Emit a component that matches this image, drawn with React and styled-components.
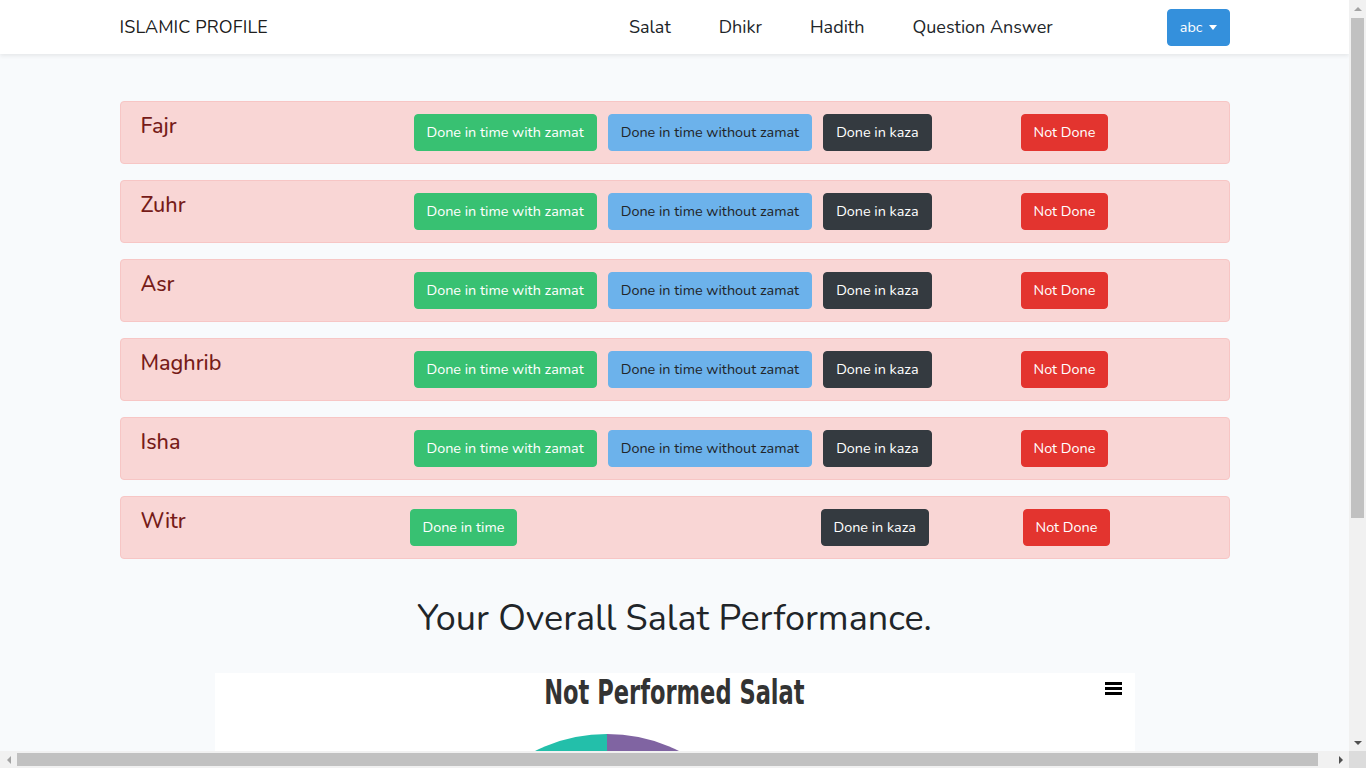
import React from 'react';
import styled, { createGlobalStyle } from 'styled-components';

const GlobalStyle = createGlobalStyle`
  html, body {
    margin: 0;
    padding: 0;
    overflow: hidden;
  }
  body {
    background: #f8fafc;
    font-family: 'Nunito', 'Lato', 'Noto Sans', sans-serif;
    font-size: 14.4px;
    line-height: 1.6;
    color: #212529;
  }
  * {
    box-sizing: border-box;
  }
`;

// Window frame: page area plus classic scrollbars
const Shell = styled.div`
  display: grid;
  grid-template-columns: 1fr 17px;
  grid-template-rows: 1fr 17px;
  width: 100vw;
  height: 100vh;
  overflow: hidden;
`;

const Page = styled.div`
  min-width: 0;
  min-height: 0;
  overflow: hidden;
  background: #f8fafc;
`;

const ScrollBar = styled.div`
  display: flex;
  flex-direction: ${({ $vertical }) => ($vertical ? 'column' : 'row')};
  background: #f1f1f1;
`;

const ScrollTrack = styled.div`
  flex: 1;
  display: flex;
  flex-direction: ${({ $vertical }) => ($vertical ? 'column' : 'row')};
  padding: ${({ $vertical }) => ($vertical ? '1px 2px' : '2px 0')};
`;

const ScrollThumb = styled.div`
  background: #c1c1c1;
  flex: 0 0 ${({ $size }) => $size}px;
`;

const Corner = styled.div`
  background: #dcdcdc;
`;

const ArrowBox = styled.div`
  flex: 0 0 17px;
  width: 17px;
  height: 17px;
  display: flex;
  align-items: center;
  justify-content: center;
`;

const arrowPoints = {
  up: '0,4 4,0 8,4',
  down: '0,0 8,0 4,4',
  left: '4,0 4,8 0,4',
  right: '0,0 0,8 4,4',
};

const ScrollArrow = ({ dir, active }) => {
  const wide = dir === 'up' || dir === 'down';
  return (
    <ArrowBox>
      <svg width={wide ? 8 : 4} height={wide ? 4 : 8}>
        <polygon points={arrowPoints[dir]} fill={active ? '#505050' : '#a3a3a3'} />
      </svg>
    </ArrowBox>
  );
};

// Top navigation bar
const NavBar = styled.nav`
  background: #fff;
  box-shadow: 0 2px 4px rgba(0, 0, 0, 0.075);
  padding: 9px 0 8px;
`;

const Container = styled.div`
  max-width: 1140px;
  margin: 0 auto;
  padding: 0 15px;
`;

const NavInner = styled(Container)`
  display: flex;
  align-items: center;
`;

const Brand = styled.a`
  font-size: 18px;
  color: rgba(0, 0, 0, 0.9);
  text-decoration: none;
  letter-spacing: 0.1px;
`;

const NavLinks = styled.ul`
  display: flex;
  list-style: none;
  margin: 0 0 0 auto;
  padding: 0;
`;

const NavLink = styled.li`
  font-size: 18px;
  color: #212529;
  padding: 0 24px;
`;

const UserButton = styled.button`
  margin-left: 90px;
  background: #3490dc;
  border: 1px solid #3490dc;
  border-radius: 4px;
  color: #fff;
  font-family: inherit;
  font-size: 14.4px;
  line-height: 1.6;
  padding: 6px 12px;
  display: flex;
  align-items: center;

  &::after {
    content: '';
    display: inline-block;
    margin-left: 6px;
    border-top: 5px solid #fff;
    border-left: 4px solid transparent;
    border-right: 4px solid transparent;
  }
`;

// Salat rows
const Main = styled(Container)`
  padding-top: 47px;
`;

const SalatList = styled.div`
  display: flex;
  flex-direction: column;
  gap: 16px;
`;

const SalatRow = styled.div`
  display: grid;
  grid-template-columns: ${({ $cols }) => $cols};
  align-items: start;
  background: #f9d6d5;
  border: 1px solid #f7c6c5;
  border-radius: 4px;
  padding: 12px 20px;
  color: #761b18;
`;

const SalatName = styled.h4`
  margin: 0;
  font-size: 21.6px;
  font-weight: 500;
  line-height: 1.2;
`;

const ButtonGroup = styled.div`
  display: flex;
  gap: 11px;
`;

const palette = {
  success: { bg: '#38c172', fg: '#fff' },
  info: { bg: '#6cb2eb', fg: '#212529' },
  dark: { bg: '#343a40', fg: '#fff' },
  danger: { bg: '#e3342f', fg: '#fff' },
};

const Btn = styled.button`
  background: ${({ $variant }) => palette[$variant].bg};
  border: 1px solid ${({ $variant }) => palette[$variant].bg};
  color: ${({ $variant }) => palette[$variant].fg};
  border-radius: 4px;
  font-family: inherit;
  font-size: 14.4px;
  line-height: 1.6;
  padding: 6px 12px;
  white-space: nowrap;
  justify-self: start;
`;

// Performance section
const SectionTitle = styled.h1`
  margin: 38px 0 32px;
  text-align: center;
  font-size: 36px;
  font-weight: 400;
  line-height: 1.2;
  color: #212529;
`;

const ChartRow = styled.div`
  margin: 0 -15px;
  display: flex;
  justify-content: center;
`;

const ChartBox = styled.div`
  position: relative;
  width: 920px;
  height: 400px;
  background: #fff;
  display: flex;
  flex-direction: column;
  align-items: center;
`;

const ChartTitle = styled.div`
  margin-top: 1px;
  font-family: 'DejaVu Sans Condensed', 'Liberation Sans Narrow', sans-serif;
  font-stretch: condensed;
  font-weight: 700;
  font-size: 33px;
  line-height: 38px;
  color: #333;
  transform: scaleX(0.76);
`;

const MenuButton = styled.div`
  position: absolute;
  top: 8px;
  right: 13px;
  width: 17px;
  height: 16px;
  display: flex;
  flex-direction: column;
  justify-content: center;
  gap: 2px;

  span {
    display: block;
    height: 3px;
    background: #000;
  }
`;

const PieWrap = styled.div`
  margin-top: 21px;
  margin-right: 136px;
`;

const salats = ['Fajr', 'Zuhr', 'Asr', 'Maghrib', 'Isha'];

const Pie = () => (
  <svg width="324" height="324" viewBox="-162 -162 324 324">
    <path d="M0 0 L0 -161 A161 161 0 0 1 0 161 Z" fill="#8064a2" />
    <path d="M0 0 L0 161 A161 161 0 0 1 0 -161 Z" fill="#23bfaa" />
  </svg>
);

const App = () => {
  return (
    <Shell>
      <GlobalStyle />
      <Page>
        <NavBar>
          <NavInner>
            <Brand href="#">ISLAMIC PROFILE</Brand>
            <NavLinks>
              <NavLink>Salat</NavLink>
              <NavLink>Dhikr</NavLink>
              <NavLink>Hadith</NavLink>
              <NavLink>Question Answer</NavLink>
            </NavLinks>
            <UserButton>abc</UserButton>
          </NavInner>
        </NavBar>

        <Main>
          <SalatList>
            {salats.map((name) => (
              <SalatRow key={name} $cols="273px 607px auto">
                <SalatName>{name}</SalatName>
                <ButtonGroup>
                  <Btn $variant="success">Done in time with zamat</Btn>
                  <Btn $variant="info">Done in time without zamat</Btn>
                  <Btn $variant="dark">Done in kaza</Btn>
                </ButtonGroup>
                <Btn $variant="danger">Not Done</Btn>
              </SalatRow>
            ))}
            <SalatRow $cols="269px 411px 202px auto">
              <SalatName>Witr</SalatName>
              <Btn $variant="success">Done in time</Btn>
              <Btn $variant="dark">Done in kaza</Btn>
              <Btn $variant="danger">Not Done</Btn>
            </SalatRow>
          </SalatList>
          <SectionTitle>Your Overall Salat Performance.</SectionTitle>
        </Main>

        <ChartRow>
          <ChartBox>
            <ChartTitle>Not Performed Salat</ChartTitle>
            <MenuButton>
              <span />
              <span />
              <span />
            </MenuButton>
            <PieWrap>
              <Pie />
            </PieWrap>
          </ChartBox>
        </ChartRow>
      </Page>

      <ScrollBar $vertical>
        <ScrollArrow dir="up" />
        <ScrollTrack $vertical>
          <ScrollThumb $size={500} />
        </ScrollTrack>
        <ScrollArrow dir="down" active />
      </ScrollBar>

      <ScrollBar>
        <ScrollArrow dir="left" />
        <ScrollTrack>
          <ScrollThumb $size={1301} />
        </ScrollTrack>
        <ScrollArrow dir="right" active />
      </ScrollBar>
      <Corner />
    </Shell>
  );
};

export default App;
